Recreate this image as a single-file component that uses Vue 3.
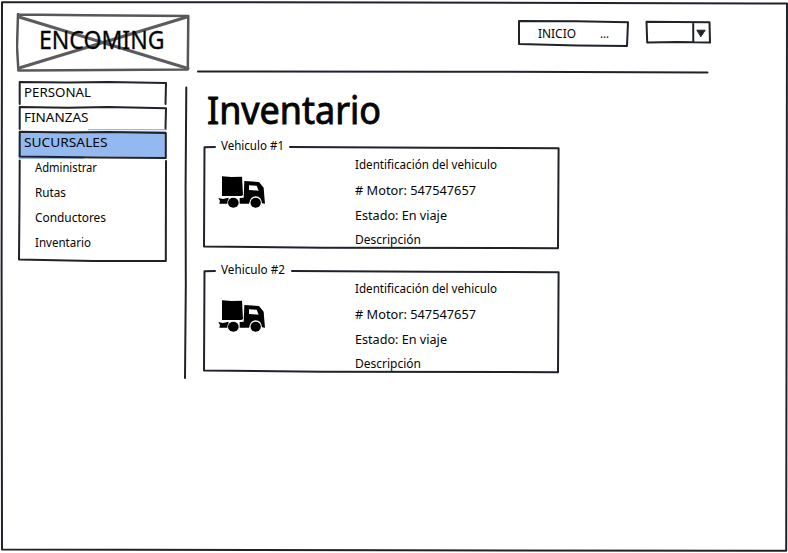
<script setup>
import { h } from 'vue'

// A line of lettering set to an exact width, drawn as live SVG text.
const Lettering = ({ text, width, size = 13 }) =>
  h('svg', { class: 'lettering', width, height: size, role: 'text' }, [
    h('text', {
      x: 0,
      y: size,
      'font-size': size,
      textLength: width,
      lengthAdjust: 'spacingAndGlyphs'
    }, text)
  ])
Lettering.props = ['text', 'width', 'size']

const sections = [
  { name: 'PERSONAL', width: 67 },
  { name: 'FINANZAS', width: 64.5 },
  { name: 'SUCURSALES', width: 83.5 }
]

const links = [
  { name: 'Administrar', width: 62 },
  { name: 'Rutas', width: 31 },
  { name: 'Conductores', width: 71 },
  { name: 'Inventario', width: 56 }
]

const details = [
  { text: 'Identificación del vehiculo', width: 142 },
  { text: '# Motor: 547547657', width: 121 },
  { text: 'Estado: En viaje', width: 92 },
  { text: 'Descripción', width: 66 }
]

const vehicles = [
  { title: 'Vehiculo #1', width: 63, outline: 'M12 2 L1.5 2.2 L1 101.6 L120 102.8 L355 103.2 L355.6 3.2 L230 2.8 L87 1.9' },
  { title: 'Vehiculo #2', width: 64, outline: 'M12 2 L1.5 2.2 L1 101.4 L120 102.8 L355 103.2 L355.6 3.2 L230 2.8 L89 1.9' }
]
</script>

<template>
  <div class="page">
    <svg class="sketch" viewBox="0 0 788 553">
      <path d="M2 2.3 L400 2.4 L787 3.5 L786.6 300 L786.2 550.8 L400 550.3 L2 549.4 L1.6 270 Z" />
    </svg>

    <header class="header">
      <div class="logo">
        <svg class="sketch cross" viewBox="0 0 174 60">
          <path class="frame" d="M2 1.5 L70 2.3 L172.3 3 L171.8 56.5 L90 57 L2.4 57.5 L1 34 L2 1" />
          <path class="diagonal" d="M3 4 L172 55.5 M3 55 L171 4" />
        </svg>
        <Lettering class="brand" text="ENCOMING" :width="125.5" :size="24.5" />
      </div>
      <div class="bar">
        <div class="controls">
          <div class="start">
            <svg class="sketch" viewBox="0 0 112 28">
              <path d="M2 2 L60 2.2 L111 3.3 L110 27 L60 26.4 L2 25 Z" />
            </svg>
            <Lettering text="INICIO" :width="38" />
            <Lettering text="..." :width="9" />
          </div>
          <div class="combo">
            <svg class="sketch" viewBox="0 0 66 24">
              <path d="M1.5 1.7 L30 2.1 L64.5 2.3 L65 22.6 L32 22 L2.2 22.5 Z M48.2 2.3 L48.3 22.2" />
              <path class="solid" d="M52.2 10.2 L60.2 10.2 L56 16.5 Z" />
            </svg>
          </div>
        </div>
        <svg class="rule" viewBox="0 0 512 4">
          <path d="M1 1.6 L250 1.7 L510.5 2.4" />
        </svg>
      </div>
    </header>

    <div class="body">
      <nav class="menu">
        <svg class="sketch" viewBox="0 0 149 182">
          <path class="tint" d="M1 51 H148 V77 L66 76.5 V79 H0.5 Z M70 49 H149 V50.2 H70 Z" />
          <path d="M1.7 24 L1.7 2 L50 2.6 L90 2.1 L148 3.1 L147.5 24" />
          <path d="M1.7 49 L1.7 27 L50 27.8 L90 27.1 L148 28.3 L147.5 48.5" />
          <path d="M1.7 51.8 L50 52.5 L90 52.1 L147.8 53 L147.8 78 L80 77.6 L1.7 76.4 Z" />
          <path d="M1.7 80.5 L1.5 120 L1 179.5 L75 181 L147.8 181 L148 81" />
        </svg>
        <div v-for="s in sections" :key="s.name" class="section">
          <Lettering :text="s.name" :width="s.width" />
        </div>
        <div v-for="l in links" :key="l.name" class="section link">
          <Lettering :text="l.name" :width="l.width" />
        </div>
      </nav>

      <svg class="divider" viewBox="0 0 6 294">
        <path d="M4.3 1.5 L3.6 100 L3.8 200 L3 292" />
      </svg>

      <main class="content">
        <Lettering class="title" text="Inventario" :width="174" :size="37.5" />
        <section v-for="v in vehicles" :key="v.title" class="card">
          <svg class="sketch" viewBox="0 0 357 105">
            <path :d="v.outline" />
          </svg>
          <Lettering class="legend" :text="v.title" :width="v.width" />
          <svg class="truck" viewBox="0 0 144 99">
            <path d="M12 1 L40 3 L72 2 L75 57 L70 60 L12 60 Z" />
            <path fill-rule="evenodd" d="M79 15 L123 18 L137 35 L139 61 L141 83 L132 82 Q130 61 113 61 Q97 61 93 83 L65 83 L65 66 L77 65 Z M93 28 L93 42 L122 44 L116 29 Z" />
            <path d="M1 66 L15 69 L31 65 L32 68 Q28 73 28 83 L4 83 L6 75 Z" />
            <ellipse cx="46" cy="80" rx="16" ry="15" />
            <ellipse cx="113" cy="80" rx="15.5" ry="15" />
          </svg>
          <div class="details">
            <Lettering v-for="d in details" :key="d.text" :text="d.text" :width="d.width" />
          </div>
        </section>
      </main>
    </div>
  </div>
</template>

<style>
body {
  background: #fff;
}

.lettering {
  display: block;
  flex: none;
  overflow: visible;
  fill: #050505;
  font-family: "Noto Sans", sans-serif;
}
</style>

<style scoped>
.page {
  position: relative;
  box-sizing: border-box;
  width: 788px;
  height: 553px;
  padding: 13px 0 0 16px;
}

.sketch {
  position: absolute;
  inset: 0;
  width: 100%;
  height: 100%;
  pointer-events: none;
}

path {
  fill: none;
  stroke: #20222a;
  stroke-width: 2;
  stroke-linecap: round;
  stroke-linejoin: round;
}

.header {
  display: flex;
  gap: 7px;
  height: 67px;
}

.logo {
  position: relative;
  display: flex;
  box-sizing: border-box;
  width: 174px;
  height: 60px;
  padding: 11px 0 0 22.5px;
}

.cross .frame {
  stroke: #57575a;
  stroke-width: 2.5;
}

.cross .diagonal {
  stroke: #5c5c5f;
  stroke-width: 3;
}

.brand {
  position: relative;
  stroke: #050505;
  stroke-width: 0.3px;
}

.bar {
  display: flex;
  flex-direction: column;
  justify-content: space-between;
  width: 512px;
  height: 61px;
}

.controls {
  display: flex;
  justify-content: flex-end;
  gap: 15.5px;
  padding-top: 6px;
}

.start {
  position: relative;
  display: flex;
  gap: 24px;
  box-sizing: border-box;
  width: 112px;
  height: 28px;
  padding: 6px 0 0 21px;
}

.combo {
  position: relative;
  width: 66px;
  height: 24px;
  margin-top: 1px;
  margin-right: -1.5px;
}

.solid {
  fill: #20222a;
  stroke-width: 1;
}

.rule {
  width: 512px;
  height: 4px;
}

.body {
  display: flex;
  padding-left: 2px;
}

.menu {
  position: relative;
  box-sizing: border-box;
  width: 149px;
  height: 182px;
  padding-top: 4px;
}

.section {
  position: relative;
  height: 25px;
  padding-left: 6px;
}

.link {
  padding-left: 17px;
}

path.tint {
  fill: #94b9f0;
  stroke: none;
}

.divider {
  width: 6px;
  height: 294px;
  margin: 6px 0 0 15px;
}

.content {
  display: flex;
  flex-direction: column;
  padding: 6px 0 0 15px;
}

.title {
  margin: -0.5px 0 22px 4px;
  stroke: #050505;
  stroke-width: 0.9px;
}

.card {
  position: relative;
  display: grid;
  grid-template-columns: 136px auto;
  grid-template-rows: 13px auto;
  box-sizing: border-box;
  width: 357px;
  height: 105px;
  margin-bottom: 19px;
}

.legend {
  grid-column: 1 / 3;
  margin: -8px 0 0 18px;
}

.truck {
  width: 48px;
  height: 33px;
  margin: 17.5px 0 0 15px;
}

.truck path {
  fill: #000;
  stroke: none;
}

.details {
  display: grid;
  grid-template-rows: 26px 25px 24px 13px;
  align-content: start;
  margin: -2px 0 0 15.6px;
}
</style>
